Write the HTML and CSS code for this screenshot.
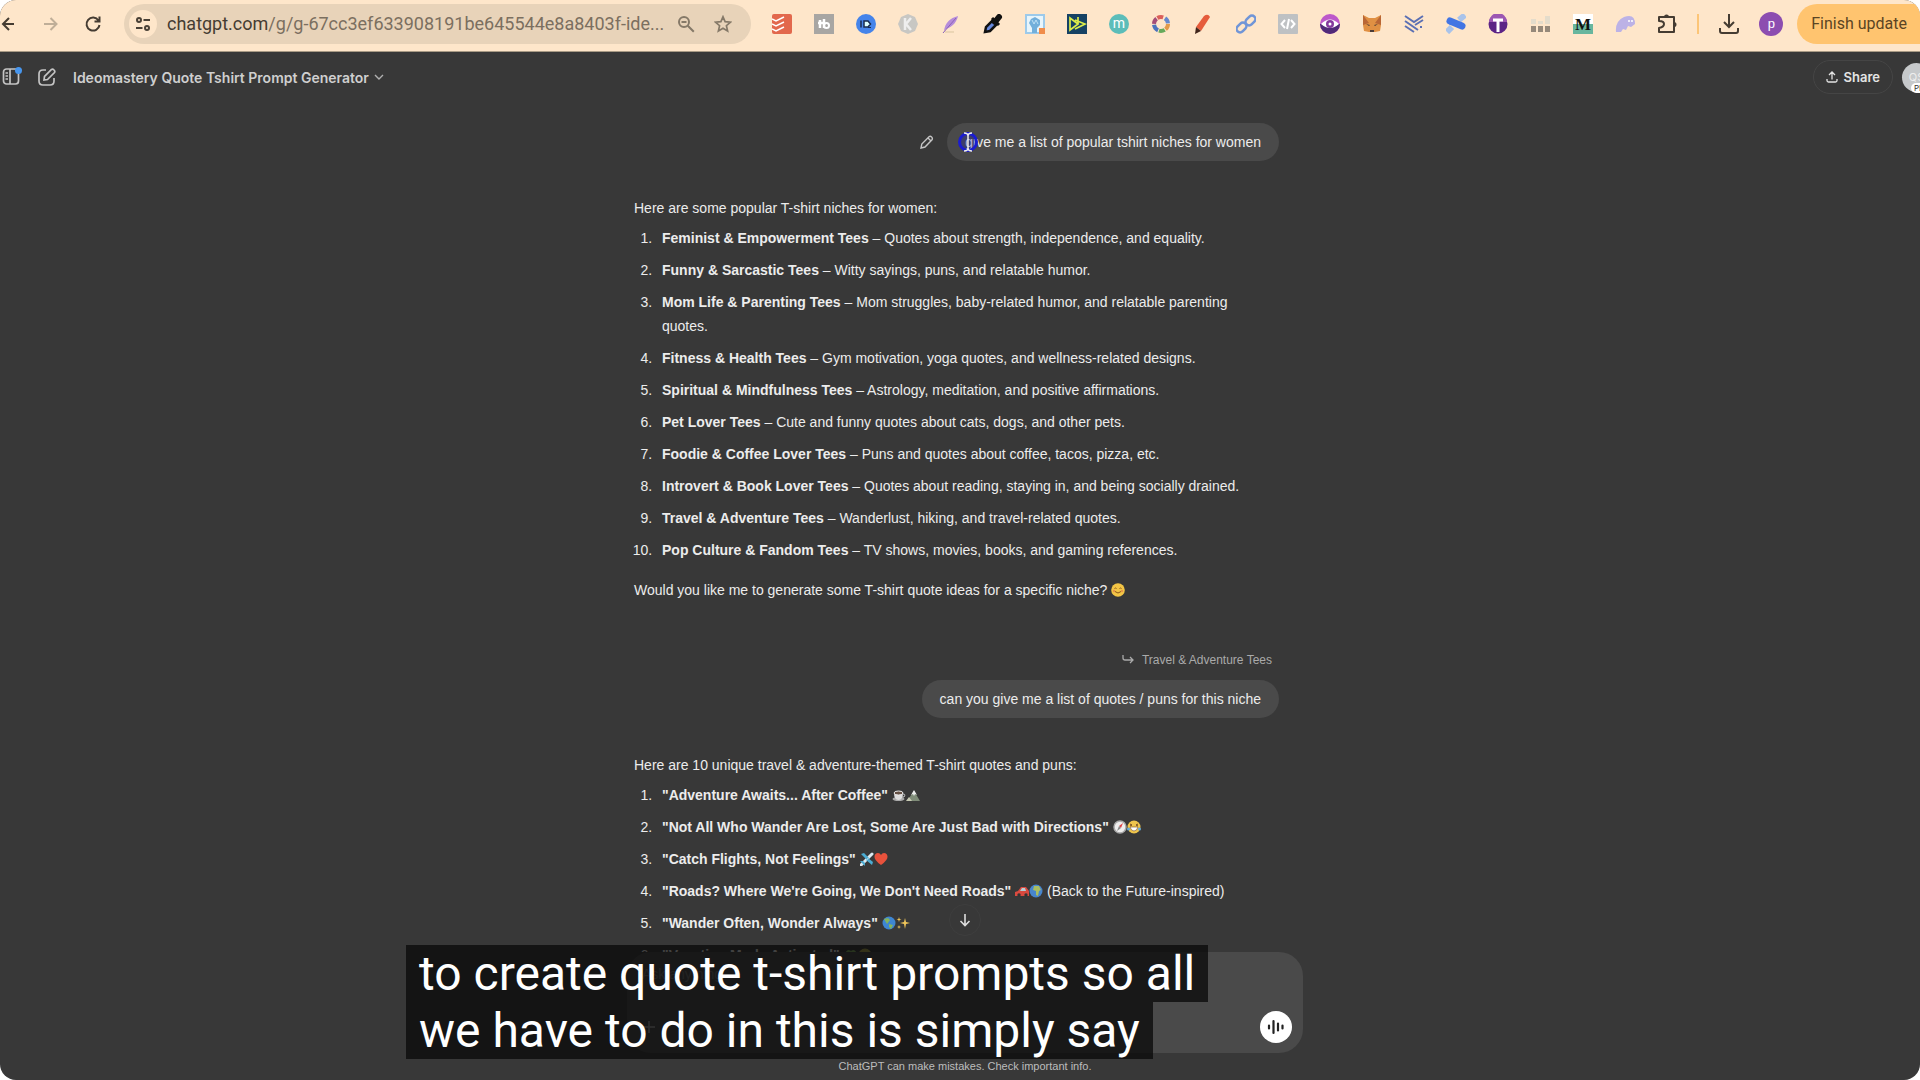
FILE: index.html
```html
<!DOCTYPE html>
<html lang="en">
<head>
    <meta charset="UTF-8">
    <meta name="viewport" content="width=device-width, initial-scale=1.0">
    <title>Ideomastery Quote Tshirt Prompt Generator</title>
    <link rel="stylesheet" href="styles.css">
</head>
<body>
<div class="window">
    <!-- Browser toolbar -->
    <div class="toolbar">
        <div class="nav-buttons">
            <button type="button" aria-label="Back"><svg width="18" height="18" viewBox="0 0 18 18" fill="none" stroke="#453c32" stroke-width="2"><path d="M14 9H3M9 3 3 9l6 6"/></svg></button>
            <button type="button" aria-label="Forward"><svg width="18" height="18" viewBox="0 0 18 18" fill="none" stroke="#bfae98" stroke-width="2"><path d="M2 9h12M8.500 3l6 6-6 6"/></svg></button>
            <button type="button" aria-label="Reload"><svg width="18" height="18" viewBox="0 0 18 18" fill="none" stroke="#453c32" stroke-width="2"><path d="M14.500 5.500A6.500 6.500 0 1 0 15.500 10M15.500 1.500v5h-5"/></svg></button>
        </div>
        <div class="address">
            <button class="site-info" type="button" aria-label="Site information"><svg width="16" height="16" viewBox="0 0 16 16" fill="none" stroke="#4a4136" stroke-width="2"><circle cx="4" cy="4" r="2"/><path d="M8.500 4H15M1 12h6.500"/><circle cx="12" cy="12" r="2"/></svg></button>
            <span class="url"><b>chatgpt.com</b>/g/g-67cc3ef633908191be645544e8a8403f-ide...</span>
            <button type="button" aria-label="Zoom"><svg width="18" height="18" viewBox="0 0 18 18" fill="none" stroke="#857968" stroke-width="2"><circle cx="7" cy="7" r="5"/><path d="M4.500 7h5M10.800 10.800l6 6"/></svg></button>
            <button type="button" aria-label="Bookmark"><svg width="18" height="18" viewBox="0 0 18 18" fill="none" stroke="#857968" stroke-width="1.700"><path d="m9 1.800 2.100 4.900 5.300.5-4 3.500 1.200 5.200L9 13.200l-4.600 2.700 1.200-5.200-4-3.500 5.300-.5z"/></svg></button>
        </div>
        <div class="extensions">
            <svg viewBox="0 0 20 20"><rect width="20" height="20" rx="2" fill="#e2684c"/><path d="m0 5 4 2 8-4M0 10l4 2 8-4M0 15l4 2 8-4" fill="none" stroke="#fff" stroke-width="1.500"/></svg>
            <svg viewBox="0 0 20 20"><rect width="20" height="20" fill="#a8a6a3"/><path d="M6 6v8M4 9h5M10 5v9" fill="none" stroke="#fff" stroke-width="2.500"/><circle cx="12.500" cy="11.500" r="2.500" fill="none" stroke="#fff" stroke-width="2"/></svg>
            <svg viewBox="0 0 20 20"><circle cx="10" cy="10" r="10" fill="#4584ea"/><path d="M5 6.500v7M8 7h4l2.500 3-2.500 3H8z" fill="#dff" stroke="#182c50" stroke-width="1.500"/><path d="M12 13.500h3" stroke="#182c50"/></svg>
            <svg viewBox="0 0 20 20"><path d="m10 0 7 3 3 7-3 7-7 3-7-3-3-7 3-7z" fill="#c8c7c3"/><path d="M7 4v12M13 4l-5 6 5 6" fill="none" stroke="#eee" stroke-width="2.500"/></svg>
            <svg viewBox="0 0 20 20"><path d="M3 17C4 9 9 4 17 2c-1 5-5 11-12 13z" fill="#b68cda"/><path d="M2 19 15 4" stroke="#8c62b8"/><path d="M4 18h9" stroke="#d9c59f"/></svg>
            <svg viewBox="0 0 20 20"><path d="m2 18 1-5 7-7 4 4-7 7z" fill="#6688dd" stroke="#111" stroke-width="2.500"/><path d="m9 4 7 7" stroke="#111" stroke-width="3"/><path d="m12 8 4-5" stroke="#111" stroke-width="6" stroke-linecap="round"/></svg>
            <svg viewBox="0 0 20 20"><path d="M1 1h18v18H1z" fill="#e8f5fb" stroke="#9dcaea" stroke-width="2"/><path d="M7 19v-5L4 9l2-4 2-1 2-1 5 3v5l-3 3v5z" fill="#72afdb"/><path d="m7 6 2 4 2-4 2 4" fill="none" stroke="#bcdff5"/><path d="M14 14h6v6h-6z" fill="#f08d4b"/></svg>
            <svg viewBox="0 0 20 20"><path d="M0 0h20v20H0z" fill="#164264"/><path d="M3 4v12l8-6zM8 6l10 4-10 5M11 3v7" fill="none" stroke="#dcec4a" stroke-width="1.700"/></svg>
            <svg viewBox="0 0 20 20"><circle cx="10" cy="10" r="10" fill="#5cbdb9"/><text x="10" y="14" text-anchor="middle" class="glyph glyph-light">m</text></svg>
            <svg viewBox="0 0 20 20" fill="none" stroke-width="4"><circle cx="10" cy="10" r="7" stroke="#e19a4a" stroke-dasharray="6 38"/><circle cx="10" cy="10" r="7" stroke="#66a95b" stroke-dasharray="6 38" stroke-dashoffset="-7"/><circle cx="10" cy="10" r="7" stroke="#4b73bd" stroke-dasharray="7 37" stroke-dashoffset="-14"/><circle cx="10" cy="10" r="7" stroke="#a44d77" stroke-dasharray="6 38" stroke-dashoffset="-22"/><circle cx="10" cy="10" r="7" stroke="#db5f5a" stroke-dasharray="6 38" stroke-dashoffset="-29"/><circle cx="10" cy="10" r="7" stroke="#6588cc" stroke-dasharray="6 38" stroke-dashoffset="-37"/></svg>
            <svg viewBox="0 0 20 20"><path d="m3 13 8-11q4-3 6 1L8 17z" fill="#e55c3c"/><path d="m3 13-1 7 6-3z" fill="#40251b"/></svg>
            <svg viewBox="0 0 20 20" fill="none" stroke="#7095d7" stroke-width="2.500"><rect x="9" y="3" width="11" height="7" rx="3.500" transform="rotate(-45 14.500 6.500)"/><rect x="0" y="10" width="11" height="7" rx="3.500" transform="rotate(-45 5.500 13.500)"/></svg>
            <svg viewBox="0 0 20 20"><rect width="20" height="20" rx="1" fill="#bec1c3"/><path d="M7 6 3.500 10 7 14M13 6l3.500 4-3.500 4M11 5 9 15" fill="none" stroke="#fff" stroke-width="2"/></svg>
            <svg viewBox="0 0 20 20"><circle cx="10" cy="10" r="10" fill="#bd58ca"/><path d="M0 10a10 10 0 0 0 20 0z" fill="#502a78"/><path d="M1 10q9-9 18 0-9 8-18 0z" fill="#fff"/><circle cx="10" cy="10" r="4" fill="#843a9e"/><circle cx="10" cy="10" r="1.500" fill="#fff"/></svg>
            <svg viewBox="0 0 20 20"><path d="m1 1 6 3h6l6-3v10l-1 6-5 1H7l-5-1-1-6z" fill="#e09043"/><path d="m1 1 6 8-6 2zM19 1l-6 8 6 2z" fill="#b96635"/><path d="m4 10 4 1-1 1zM16 10l-4 1 1 1zM8 16h4v2H8z" fill="#4b3b36"/></svg>
            <svg viewBox="0 0 20 20" fill="none" stroke="#5c70b3" stroke-width="2"><path d="m1 2 9 6 9-6M1 7l13 9M1 12l9 6M11 11l8-5"/><path d="M16 13h2" stroke-dasharray="2 1"/></svg>
            <svg viewBox="0 0 20 20"><path d="m1 18 5-5M13 6l6-5" stroke="#a9c3ea" stroke-width="6"/><path d="m4 7 12 5" stroke="#4275e3" stroke-width="7" stroke-linecap="round"/></svg>
            <svg viewBox="0 0 20 20"><circle cx="10" cy="10" r="9.500" fill="#5c2486"/><path d="M1 8a9 9 0 0 1 18 0z" fill="#9c57b2"/><path d="M5 6h10M10 6v12" stroke="#fff" stroke-width="3"/></svg>
            <svg viewBox="0 0 20 20"><path d="M0 12h5v6H0zM7 12h5v6H7zM14 12h5v6h-5z" fill="#96897a"/><path d="M0 5h5v5H0zM7 7h5v3H7zM14 2h5v8h-5z" fill="#e4dccb"/></svg>
            <svg viewBox="0 0 20 20"><path d="M0 0h20v10H0z" fill="#fff"/><path d="M0 10h20v10H0z" fill="#68b69e"/><text x="10" y="16" text-anchor="middle" class="glyph glyph-serif">M</text></svg>
            <svg viewBox="0 0 20 20"><path d="M1 18Q0 7 9 3q11-4 11 7l-4 3-3-1-2 4-3-1-2 3z" fill="#bcb2e6"/><circle cx="14" cy="7" r="1" fill="#fff"/><circle cx="17" cy="7" r="1" fill="#fff"/></svg>
            <svg viewBox="0 0 20 20"><path d="M2 3h15v15H2v-4q5-1 5-4T2 7z" fill="none" stroke="#453c32" stroke-width="2" stroke-linejoin="round"/><path d="M7 3a2.500 2.500 0 0 1 5 0M17 8a2.500 2.500 0 0 1 0 5" fill="#453c32"/></svg>
        </div>
        <span class="divider"></span>
        <button class="download" type="button" aria-label="Downloads"><svg width="20" height="20" viewBox="0 0 20 20" fill="none" stroke="#453c32" stroke-width="2"><path d="M10 0v13M5 8l5 5 5-5M1 14v3q0 2 2 2h14q2 0 2-2v-3"/></svg></button>
        <button class="profile" type="button">p</button>
        <button class="update" type="button">Finish update</button>
    </div>

    <!-- Chat header -->
    <header class="chat-header">
        <button class="sidebar-toggle" type="button" aria-label="Open sidebar"><svg width="20" height="20" viewBox="0 0 20 20" fill="none" stroke="#c4c4c4" stroke-width="1.700"><rect x="2.500" y="2" width="15" height="15" rx="3"/><path d="M9 2v15M4.500 6H7M4.500 9H7M4.500 12H7"/></svg><i class="dot"></i></button>
        <button type="button" aria-label="New chat"><svg width="18" height="18" viewBox="0 0 18 18" fill="none" stroke="#c4c4c4" stroke-width="1.700"><path d="M8 2H5Q1 2 1 6v7q0 4 4 4h7q4 0 4-4v-3"/><path d="m6 12 .5-3.500 7-7q1.200-.8 2.500.5t.5 2.500l-7 7z"/></svg></button>
        <button class="model" type="button">Ideomastery Quote Tshirt Prompt Generator <svg width="10" height="6" viewBox="0 0 10 6" fill="none" stroke="#b0b0b0" stroke-width="1.400"><path d="m1 1 4 4 4-4"/></svg></button>
        <button class="share" type="button"><svg width="12" height="12" viewBox="0 0 12 12" fill="none" stroke="#e4e4e4" stroke-width="1.300"><path d="M6 8.500V1M3 4l3-3 3 3M1 8v1.500Q1 11 2.500 11h7Q11 11 11 9.500V8"/></svg>Share</button>
        <button class="avatar" type="button"><span>QS</span><em>PLUS</em></button>
    </header>

    <!-- Conversation -->
    <main class="chat">
        <div class="column">
            <div class="user-row">
                <button type="button" aria-label="Edit message"><svg width="14" height="14" viewBox="0 0 14 14" fill="none" stroke="#c4c4c4" stroke-width="1.400"><path d="m1 13 .8-4L9 1.800q1.300-1 2.600.2t.4 2.800L5 12zM8 3l3 3"/></svg></button>
                <div class="bubble">give me a list of popular tshirt niches for women
                    <svg class="pointer" width="20" height="20" viewBox="0 0 20 20"><circle cx="10" cy="10" r="8.500" fill="#2226b8" fill-opacity=".3" stroke="#1b1cd0" stroke-width="3"/><path d="M6 1q4 0 4 3 0-3 4-3M10 4v12M6 19q4 0 4-3 0 3 4 3" fill="none" stroke="#eee" stroke-width="1.500"/></svg>
                </div>
            </div>
            <div class="answer">
                <p>Here are some popular T-shirt niches for women:</p>
                <ol>
                    <li><strong>Feminist &amp; Empowerment Tees</strong> – Quotes about strength, independence, and equality.</li>
                    <li><strong>Funny &amp; Sarcastic Tees</strong> – Witty sayings, puns, and relatable humor.</li>
                    <li><strong>Mom Life &amp; Parenting Tees</strong> – Mom struggles, baby-related humor, and relatable parenting quotes.</li>
                    <li><strong>Fitness &amp; Health Tees</strong> – Gym motivation, yoga quotes, and wellness-related designs.</li>
                    <li><strong>Spiritual &amp; Mindfulness Tees</strong> – Astrology, meditation, and positive affirmations.</li>
                    <li><strong>Pet Lover Tees</strong> – Cute and funny quotes about cats, dogs, and other pets.</li>
                    <li><strong>Foodie &amp; Coffee Lover Tees</strong> – Puns and quotes about coffee, tacos, pizza, etc.</li>
                    <li><strong>Introvert &amp; Book Lover Tees</strong> – Quotes about reading, staying in, and being socially drained.</li>
                    <li><strong>Travel &amp; Adventure Tees</strong> – Wanderlust, hiking, and travel-related quotes.</li>
                    <li><strong>Pop Culture &amp; Fandom Tees</strong> – TV shows, movies, books, and gaming references.</li>
                </ol>
                <p>Would you like me to generate some T-shirt quote ideas for a specific niche? <svg class="emoji" viewBox="0 0 14 14"><circle cx="7" cy="7" r="6.800" fill="#f3c545"/><path d="M3.500 5.500q1-1 2 0M8.500 5.500q1-1 2 0M4 8.500q3 3 6 0" fill="none" stroke="#87551a"/><circle cx="3" cy="8" r="1.200" fill="#e8954a"/><circle cx="11" cy="8" r="1.200" fill="#e8954a"/></svg></p>
            </div>
            <div class="reply-tag"><svg width="12" height="10" viewBox="0 0 12 10" fill="none" stroke="#aaa" stroke-width="1.300"><path d="M1 0v3q0 2 2 2h8M8 2l3 3-3 3"/></svg>Travel &amp; Adventure Tees</div>
            <div class="user-row">
                <div class="bubble">can you give me a list of quotes / puns for this niche</div>
            </div>
            <div class="answer">
                <p>Here are 10 unique travel &amp; adventure-themed T-shirt quotes and puns:</p>
                <ol>
                    <li><strong>"Adventure Awaits... After Coffee"</strong> <svg class="emoji" viewBox="0 0 14 14"><ellipse cx="6.500" cy="11" rx="6" ry="2" fill="#aaa"/><path d="M2 5h9q0 7-4.500 7T2 5z" fill="#ddd"/><ellipse cx="6.500" cy="5" rx="4.500" ry="2" fill="#655145" stroke="#eee"/><path d="M11 6q3 0 1 3h-2" fill="none" stroke="#ccc"/></svg><svg class="emoji" viewBox="0 0 14 14"><path d="m1 13 7-10 6 10z" fill="#7f8c78"/><path d="m5 7 3-5 3 5-2-1-1 2-1-2z" fill="#eee"/><path d="m0 13 3-4 3 4z" fill="#c7cab3"/></svg></li>
                    <li><strong>"Not All Who Wander Are Lost, Some Are Just Bad with Directions"</strong> <svg class="emoji" viewBox="0 0 14 14"><circle cx="7" cy="7" r="6" fill="#eee" stroke="#aaa" stroke-width="1.500"/><path d="m10 3-2 5-2-2z" fill="#de4242"/><path d="m4 11 2-5 2 2z" fill="#888"/></svg><svg class="emoji" viewBox="0 0 14 14"><circle cx="7" cy="7" r="6.500" fill="#efc54c"/><path d="m3 4 2 1-2 1M11 4 9 5l2 1" fill="none" stroke="#724a20"/><path d="M3 7h8q-1 4-4 4T3 7z" fill="#fff" stroke="#724a20" stroke-width=".6"/><circle cx="1.500" cy="9" r="1.500" fill="#62a9d9"/><circle cx="12.500" cy="9" r="1.500" fill="#62a9d9"/></svg></li>
                    <li><strong>"Catch Flights, Not Feelings"</strong> <svg class="emoji" viewBox="0 0 14 14"><path d="M1 13 12 2" stroke="#dceaf0" stroke-width="3" stroke-linecap="round"/><path d="m1 2 3-1 5 5-2 2zM12 13l1-3-5-4-2 2zM0 9l3 0 2 2v3l-2-2z" fill="#4babd2"/></svg><svg class="emoji" viewBox="0 0 14 14"><path d="M7 13Q0 8 .5 4.500.800 1 4 1q2 0 3 2 1-2 3-2 3.200 0 3.500 3.500Q14 8 7 13z" fill="#e8523c"/></svg></li>
                    <li><strong>"Roads? Where We're Going, We Don't Need Roads"</strong> <svg class="emoji" viewBox="0 0 14 14"><path d="M0 8l3-1 3-4h5l3 4v5H0z" fill="#d94a3f"/><path d="m5 7 2-3h3l1 3z" fill="#b5ccd4"/><circle cx="4" cy="11" r="1.700" fill="#333"/><circle cx="11" cy="11" r="1.700" fill="#333"/></svg><svg class="emoji" viewBox="0 0 14 14"><circle cx="7" cy="7" r="6.500" fill="#4785ce"/><path d="M5 2h5l2 4-2 1-1 5-2-1V7L4 6z" fill="#a9bd62"/></svg> (Back to the Future-inspired)</li>
                    <li><strong>"Wander Often, Wonder Always"</strong> <svg class="emoji" viewBox="0 0 14 14"><circle cx="7" cy="7" r="6.500" fill="#3e86d2"/><path d="m2 3 4-1 2 2-3 4zM7 8l4 1-2 4-2-2z" fill="#84b35e"/></svg><svg class="emoji" viewBox="0 0 14 14" fill="#f0c65a"><path d="m9 2 1 4 4 1-4 1-1 5-1-5-4-1 4-1zM3 1l.6 2 1.900.500-1.900.600L3 6l-.6-2L.5 3.500 2.400 3zM3 9l.5 1.500L5 11l-1.500.500L3 13l-.5-1.500L1 11l1.500-.500z"/></svg></li>
                    <li><strong>"Vacation Mode Activated"</strong> <svg class="emoji" viewBox="0 0 14 14"><path d="M7 4v9" stroke="#9a7040" stroke-width="2"/><path d="M1 6q2-6 6-3 4-3 6 3-4-3-6-1-2-2-6 1z" fill="#84b35e"/></svg><svg class="emoji" viewBox="0 0 14 14"><circle cx="7" cy="7" r="6.500" fill="#b5ad4d"/><path d="M1 5h12v2H1z" fill="#333"/></svg></li>
                </ol>
            </div>
        </div>
    </main>

    <!-- Composer -->
    <footer class="dock">
        <button class="scroll-down" type="button" aria-label="Scroll to bottom"><svg width="12" height="14" viewBox="0 0 12 14" fill="none" stroke="#ddd" stroke-width="1.600"><path d="M6 1v11M1.500 8 6 12.500 10.500 8"/></svg></button>
        <form class="composer">
            <textarea placeholder="Ask anything" aria-label="Message" rows="1"></textarea>
            <div class="composer-actions">
                <button type="button" aria-label="Add"><svg width="14" height="14" viewBox="0 0 14 14" stroke="#aaa" stroke-width="1.500"><path d="M7 1v12M1 7h12"/></svg></button>
                <button class="voice" type="button" aria-label="Voice mode"><svg width="18" height="16" viewBox="0 0 18 16" stroke="#222" stroke-width="2.200" stroke-linecap="round"><path d="M2 6.500v3M6.500 2v12M11 4.500v7M15.500 6.500v3"/></svg></button>
            </div>
        </form>
        <p class="disclaimer">ChatGPT can make mistakes. Check important info.</p>
    </footer>

    <!-- Video caption -->
    <div class="caption">
        <span>to create quote t-shirt prompts so all</span>
        <span>we have to do in this is simply say</span>
    </div>
</div>
</body>
</html>
```
FILE: styles.css
```css
* {
    box-sizing: border-box;
}
body {
    margin: 0;
    background: #fff;
    font-family: "Liberation Sans", Arial, sans-serif;
    font-size: 14px;
    color: #ececec;
}
button {
    display: flex;
    align-items: center;
    justify-content: center;
    flex: none;
    margin: 0;
    padding: 0;
    border: 0;
    background: none;
    color: inherit;
    font: inherit;
}
svg {
    flex: none;
}
.window {
    position: relative;
    display: flex;
    flex-direction: column;
    height: 100vh;
    overflow: hidden;
    border-radius: 16px;
    background: #383838;
}

/* Browser toolbar */
.toolbar {
    display: flex;
    align-items: center;
    flex: none;
    height: 52px;
    padding-bottom: 4px;
    border-bottom: 1px solid #a89a85;
    background: #fee6ca;
}
.nav-buttons {
    display: flex;
    gap: 24px;
    width: 124px;
}
.address {
    display: flex;
    align-items: center;
    gap: 19px;
    width: 627px;
    height: 40px;
    padding: 0 19px 0 5px;
    border-radius: 20px;
    background: #e8d3b9;
}
.site-info {
    width: 28px;
    height: 28px;
    border-radius: 50%;
    background: #fee6ca;
}
.url {
    flex: 1;
    margin: 0 -8px 0 -9px;
    white-space: nowrap;
    font-family: Roboto, sans-serif;
    font-size: 18px;
    color: #7b6f60;
}
.url b {
    font-weight: 400;
    color: #453c32;
}
.extensions {
    display: flex;
    flex: 1;
    justify-content: space-between;
    padding: 0 20px 0 21px;
}
.extensions svg {
    width: 20px;
    height: 20px;
}
.glyph {
    font-family: Roboto, sans-serif;
    font-size: 14px;
}
.glyph-light {
    fill: #fff;
}
.glyph-serif {
    font-family: "Liberation Serif", serif;
    font-size: 17px;
    font-weight: 700;
    fill: #111;
}
.divider {
    width: 2px;
    height: 20px;
    background: #fcc577;
}
.download {
    margin: 0 20px;
}
.profile {
    width: 24px;
    height: 24px;
    border-radius: 50%;
    background: #8c4db0;
    color: #fff;
    font-size: 13px;
}
.update {
    height: 40px;
    margin-left: 14px;
    padding: 0 13px 0 14px;
    border-radius: 20px 0 0 20px;
    background: #ffc46f;
    color: #5a4424;
    font-family: Roboto, sans-serif;
    font-size: 16px;
}

/* Chat header */
.chat-header {
    display: flex;
    align-items: center;
    flex: none;
    gap: 17px;
    height: 50px;
    padding-left: 1px;
    color: #cfcfcf;
    font-family: Inter, sans-serif;
    font-weight: 600;
}
.sidebar-toggle {
    position: relative;
}
.dot {
    position: absolute;
    top: 0;
    right: -1px;
    width: 7px;
    height: 7px;
    border-radius: 50%;
    background: #4796ee;
}
.model {
    gap: 5px;
}
.share {
    gap: 6px;
    height: 34px;
    margin-left: auto;
    padding: 0 12px;
    border: 1px solid #454545;
    border-radius: 17px;
    color: #e4e4e4;
    font-size: 13px;
}
.avatar {
    position: relative;
    width: 29px;
    height: 29px;
    margin: 0 -11px 0 -8px;
    border-radius: 50%;
    background: #c6c9cb;
    color: #eee;
    font-size: 11px;
    font-weight: 400;
}
.avatar em {
    position: absolute;
    bottom: -1px;
    left: 9px;
    padding: 0 3px;
    border-radius: 5px;
    background: #fff;
    color: #333;
    font-size: 8px;
    font-style: normal;
}

/* Conversation */
.chat {
    flex: 1;
    min-height: 0;
    padding: 21px 0 0 10px;
    overflow: hidden;
}
.column {
    width: 662px;
    margin: 0 auto;
}
.user-row {
    display: flex;
    align-items: center;
    justify-content: flex-end;
    gap: 13px;
    padding-right: 17px;
}
.bubble {
    position: relative;
    padding: 7px 18px;
    border-radius: 19px;
    background: #4a4a4a;
    line-height: 24px;
}
.pointer {
    position: absolute;
    top: 9px;
    left: 11px;
}
.answer {
    padding: 35px 28px 0 0;
    line-height: 24px;
}
.answer p {
    margin: 0;
}
.answer ol {
    margin: 6px 0 16px;
    padding-left: 22px;
}
.answer li {
    margin-bottom: 8px;
    padding-left: 6px;
}
.answer strong {
    font-weight: 700;
}
.emoji {
    width: 14px;
    height: 14px;
    vertical-align: -2px;
}
.reply-tag {
    display: flex;
    align-items: center;
    justify-content: flex-end;
    gap: 8px;
    margin: 50px 0 12px;
    padding-right: 24px;
    color: #aaa;
    font-size: 12px;
    line-height: 16px;
}

/* Composer */
.dock {
    position: relative;
    flex: none;
    padding-left: 10px;
}
.scroll-down {
    position: absolute;
    top: -48px;
    left: calc(50% - 11px);
    width: 32px;
    height: 32px;
    border: 1px solid #3e3e3e;
    border-radius: 50%;
    background: #383838;
}
.composer {
    display: flex;
    flex-direction: column;
    justify-content: space-between;
    width: 676px;
    height: 101px;
    margin: 0 auto;
    padding: 10px 11px 10px 15px;
    border-radius: 24px;
    background: #4a4a4a;
}
.composer textarea {
    height: 24px;
    padding: 0;
    border: 0;
    background: none;
    color: inherit;
    font: inherit;
    line-height: 24px;
    resize: none;
}
.composer-actions {
    display: flex;
    align-items: center;
    justify-content: space-between;
}
.voice {
    width: 32px;
    height: 32px;
    border-radius: 50%;
    background: #fff;
}
.disclaimer {
    margin: 0;
    color: #bdbdbd;
    font-size: 11px;
    line-height: 27px;
    text-align: center;
}

/* Video caption */
.caption {
    position: absolute;
    bottom: 21px;
    left: 406px;
}
.caption span {
    display: block;
    width: fit-content;
    padding: 0 13px;
    background: rgba(8, 8, 8, 0.75);
    color: #fff;
    font-family: Roboto, sans-serif;
    font-size: 48px;
    line-height: 57px;
}
```
